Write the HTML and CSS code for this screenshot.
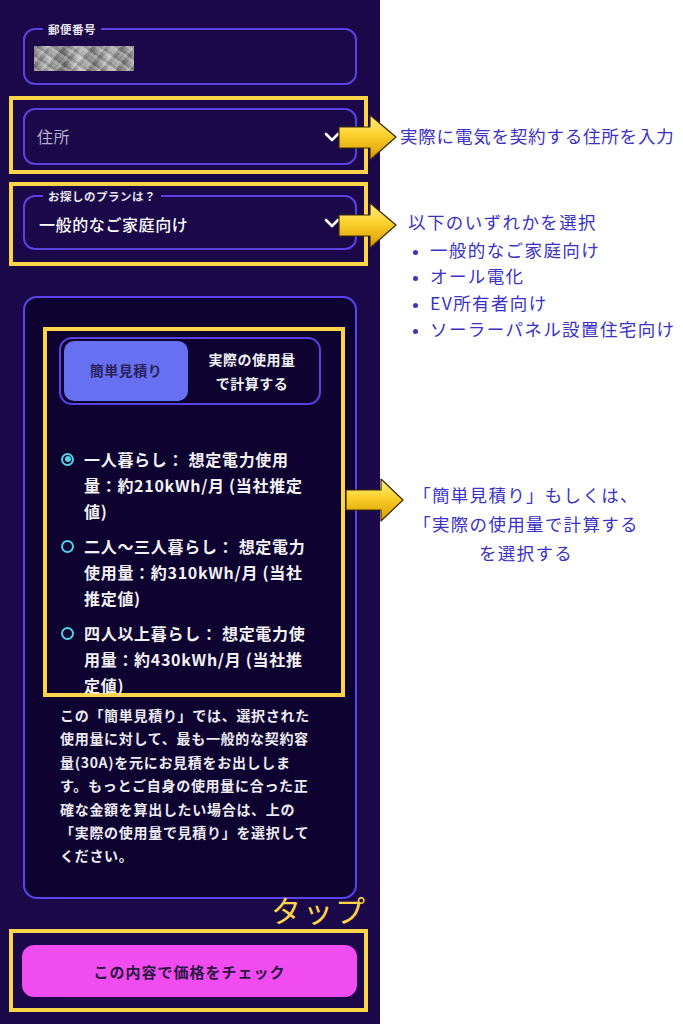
FILE: index.html
```html
<!DOCTYPE html>
<html lang="ja">
<head>
<meta charset="utf-8">
<link rel="stylesheet" href="styles.css">
</head>
<body>
<div class="page">
  <div class="panel">
    <div class="field field-zip">
      <span class="legend">郵便番号</span>
      <div class="blur"></div>
    </div>

    <div class="mark mark-1">
      <div class="field field-select">
        <span class="placeholder">住所</span>
        <svg class="chev" viewBox="0 0 16 10" width="16" height="10"><path d="M2 2 L8 8 L14 2" fill="none" stroke="#fff" stroke-width="2.6" stroke-linecap="round" stroke-linejoin="round"/></svg>
      </div>
    </div>

    <div class="mark mark-2">
      <div class="field field-select field-plan">
        <span class="legend">お探しのプランは？</span>
        <span class="value">一般的なご家庭向け</span>
        <svg class="chev" viewBox="0 0 16 10" width="16" height="10"><path d="M2 2 L8 8 L14 2" fill="none" stroke="#fff" stroke-width="2.6" stroke-linecap="round" stroke-linejoin="round"/></svg>
      </div>
    </div>

    <div class="card">
      <div class="mark mark-3">
        <div class="tabs">
          <div class="tab tab-active">簡単見積り</div>
          <div class="tab">実際の使用量<br>で計算する</div>
        </div>
        <ul class="radios">
          <li class="radio-item"><span class="radio radio-on"></span><span class="radio-text">一人暮らし： 想定電力使用量：約210kWh/月 (当社推定値)</span></li>
          <li class="radio-item"><span class="radio"></span><span class="radio-text">二人〜三人暮らし： 想定電力使用量：約310kWh/月 (当社推定値)</span></li>
          <li class="radio-item"><span class="radio"></span><span class="radio-text">四人以上暮らし： 想定電力使用量：約430kWh/月 (当社推定値)</span></li>
        </ul>
      </div>
      <p class="note">この「簡単見積り」では、選択された<br>使用量に対して、最も一般的な契約容<br>量(30A)を元にお見積をお出ししま<br>す。もっとご自身の使用量に合った正<br>確な金額を算出したい場合は、上の<br>「実際の使用量で見積り」を選択して<br>ください。</p>
    </div>

    <div class="tap">タップ</div>

    <div class="mark mark-4">
      <div class="submit">この内容で価格をチェック</div>
    </div>
  </div>

  <div class="notes">
    <p class="ann ann-1">実際に電気を契約する住所を入力</p>
    <p class="ann ann-2">以下のいずれかを選択</p>
    <ul class="ann-list">
      <li>一般的なご家庭向け</li>
      <li>オール電化</li>
      <li>EV所有者向け</li>
      <li>ソーラーパネル設置住宅向け</li>
    </ul>
    <p class="ann ann-3">「簡単見積り」もしくは、<br>「実際の使用量で計算する<br>を選択する</p>
  </div>

  <svg class="arrow arrow-1" viewBox="0 0 60 50" width="60" height="50"><defs><linearGradient id="g1" x1="0" y1="0" x2="0" y2="1"><stop offset="0" stop-color="#fff08a"/><stop offset="0.45" stop-color="#fbd02a"/><stop offset="1" stop-color="#d99700"/></linearGradient></defs><polygon points="1,15 32,15 32,3 58,25 32,48 32,36 1,36" fill="url(#g1)" stroke="#3b2a08" stroke-width="1.2" stroke-linejoin="round"/></svg>
  <svg class="arrow arrow-2" viewBox="0 0 60 50" width="60" height="50"><polygon points="1,15 32,15 32,3 58,25 32,48 32,36 1,36" fill="url(#g1)" stroke="#3b2a08" stroke-width="1.2" stroke-linejoin="round"/></svg>
  <svg class="arrow arrow-3" viewBox="0 0 60 50" width="60" height="50"><polygon points="1,15 36,15 36,4 58,25 36,46 36,35 1,35" fill="url(#g1)" stroke="#3b2a08" stroke-width="1.2" stroke-linejoin="round"/></svg>
</div>
</body>
</html>
```

FILE: styles.css
```css
* { box-sizing: border-box; }
html, body { margin: 0; padding: 0; background: #ffffff; }
body { font-family: "Noto Sans CJK JP", "Noto Sans", sans-serif; }

.page {
  position: relative;
  display: flex;
  width: 683px;
  height: 1024px;
  overflow: hidden;
}

.panel {
  width: 380px;
  height: 1024px;
  background: #1a0848;
  padding-top: 28px;
  display: flex;
  flex-direction: column;
}

.field {
  position: relative;
  border: 2px solid #5a42e2;
  border-radius: 12px;
  background: #1a0848;
  display: flex;
  align-items: center;
}

.field-zip {
  margin: 0 23px;
  height: 57px;
  padding-left: 9px;
}

.legend {
  position: absolute;
  top: -9px;
  left: 18px;
  padding: 0 5px;
  background: #1a0848;
  color: #e6e4ee;
  font-size: 11.5px;
  font-weight: 700;
  line-height: 16px;
  letter-spacing: 0.5px;
}

.blur {
  width: 100px;
  height: 25px;
  margin-top: 4px;
  filter: blur(0.6px);
  background:
    repeating-linear-gradient(35deg, rgba(255,255,255,0.18) 0 3px, rgba(0,0,0,0.12) 3px 6px, transparent 6px 9px),
    repeating-linear-gradient(-50deg, rgba(0,0,0,0.14) 0 4px, rgba(255,255,255,0.15) 4px 7px, transparent 7px 11px),
    linear-gradient(90deg, #8d8d8d 0%, #b4b4b4 15%, #7a7a7a 30%, #c2c2c2 45%, #858585 60%, #b8b8b8 75%, #8a8a8a 90%, #a8a8a8 100%);
}

.mark {
  border: 4px solid #fcd449;
}

.mark-1 {
  margin: 11px 12px 0 9px;
  padding: 8px 7px 5px 10px;
}

.mark-2 {
  margin: 8px 12px 0 9px;
  padding: 9px 7px 12px 10px;
}

.field-select {
  height: 57px;
  padding: 0 15px 0 12px;
  justify-content: space-between;
}

.field-plan {
  height: 55px;
  padding-left: 14px;
}

.placeholder {
  color: #b6aed0;
  font-size: 16px;
  letter-spacing: 0.5px;
  margin-top: -2px;
}

.value {
  color: #ffffff;
  font-size: 16px;
  font-weight: 500;
  letter-spacing: 0.6px;
  margin-top: 2px;
}

.chev { display: block; }

.card {
  margin: 30px 23px 0 23px;
  height: 603px;
  border: 2px solid #5b44f0;
  border-radius: 14px;
  background: #0e0230;
  padding-top: 29px;
}

.mark-3 {
  margin: 0 10px 0 18px;
  height: 370px;
  padding: 6px 0 0 0;
}

.tabs {
  margin: 0 20px 0 12px;
  height: 68px;
  border: 2px solid #5a42e2;
  border-radius: 13px;
  padding: 2px 3px;
  display: flex;
}

.tab {
  flex: 1;
  display: flex;
  align-items: center;
  justify-content: center;
  text-align: center;
  color: #f2f2f6;
  font-size: 14px;
  font-weight: 700;
  line-height: 24px;
  letter-spacing: 0.5px;
}

.tab-active {
  flex: 0 0 124px;
  background: #6670f0;
  border-radius: 10px;
  color: #2a2258;
  padding-bottom: 2px;
}

.radios {
  list-style: none;
  margin: 41px 0 0 0;
  padding: 0 0 0 14px;
  display: flex;
  flex-direction: column;
  gap: 9px;
}

.radio-item {
  display: flex;
  align-items: flex-start;
}

.radio {
  flex: 0 0 13px;
  width: 13px;
  height: 13px;
  margin-top: 6.5px;
  margin-right: 10px;
  border: 2px solid #4fd4e4;
  border-radius: 50%;
  position: relative;
}

.radio-on::after {
  content: "";
  position: absolute;
  left: 1.5px;
  top: 1.5px;
  width: 6px;
  height: 6px;
  border-radius: 50%;
  background: #4fd4e4;
}

.radio-text {
  width: 232px;
  color: #f2f2f4;
  font-size: 16px;
  font-weight: 700;
  line-height: 26px;
  letter-spacing: 0.7px;
  line-break: strict;
}

.note {
  margin: 7px 0 0 35px;
  width: 280px;
  color: #ecebf2;
  font-size: 14px;
  font-weight: 700;
  line-height: 23.4px;
  letter-spacing: 0.7px;
}

.tap {
  margin: -6px 13px 0 0;
  text-align: right;
  color: #fcd449;
  font-size: 30px;
  line-height: 32px;
  letter-spacing: 2px;
  position: relative;
}

.mark-4 {
  margin: 4px 12px 0 9px;
  padding: 12px 7px 11px 9px;
}

.submit {
  height: 52px;
  background: #f04cf0;
  border-radius: 12px;
  display: flex;
  align-items: center;
  justify-content: center;
  color: #2a1640;
  font-size: 15px;
  font-weight: 700;
  letter-spacing: 1px;
}

.notes {
  flex: 1;
  padding-left: 20px;
  color: #3a31c6;
}

.ann {
  margin: 0;
  font-size: 17.5px;
  line-height: 26px;
  letter-spacing: 1.4px;
}

.ann-1 {
  margin-top: 123px;
  letter-spacing: 0.8px;
}

.ann-2 {
  margin-top: 60px;
  padding-left: 8px;
}

.ann-list {
  margin: 2px 0 0 0;
  padding: 0 0 0 30px;
  font-size: 17.5px;
  line-height: 26.3px;
  letter-spacing: 1.4px;
}

.ann-list li::marker {
  font-size: 14px;
}

.ann-3 {
  margin-top: 138px;
  width: 240px;
  margin-left: 6px;
  text-align: center;
  line-height: 29px;
  letter-spacing: 1.3px;
}

.arrow {
  position: absolute;
  display: block;
}

.arrow-1 { left: 338px; top: 112px; }
.arrow-2 { left: 338px; top: 200px; }
.arrow-3 { left: 345px; top: 475px; }
```
